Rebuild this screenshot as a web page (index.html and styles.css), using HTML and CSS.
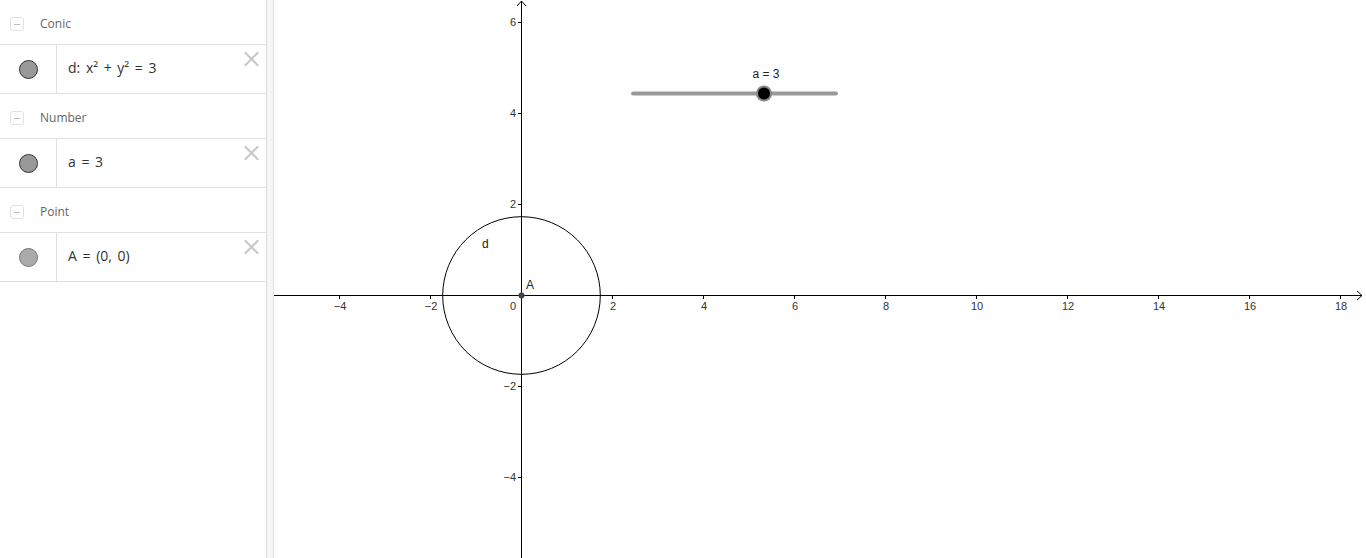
FILE: index.html
```html
<!DOCTYPE html>
<html lang="en">
<head>
<meta charset="utf-8">
<title>GeoGebra</title>
<link rel="stylesheet" href="styles.css">
</head>
<body>
<div class="app">
  <aside class="algebra">
    <section class="group">
      <div class="group-head"><span class="toggle"></span><span class="group-title">Conic</span></div>
      <div class="item">
        <div class="marble-cell"><span class="marble"></span></div>
        <div class="formula">d: x² + y² = 3</div>
        <span class="close"></span>
      </div>
    </section>
    <section class="group">
      <div class="group-head"><span class="toggle"></span><span class="group-title">Number</span></div>
      <div class="item">
        <div class="marble-cell"><span class="marble"></span></div>
        <div class="formula">a = 3</div>
        <span class="close"></span>
      </div>
    </section>
    <section class="group">
      <div class="group-head"><span class="toggle"></span><span class="group-title">Point</span></div>
      <div class="item">
        <div class="marble-cell"><span class="marble light"></span></div>
        <div class="formula">A = (0, 0)</div>
        <span class="close"></span>
      </div>
    </section>
  </aside>
  <div class="splitter"></div>
  <main class="graphics">
    <svg class="canvas" width="1092" height="558" viewBox="0 0 1092 558" xmlns="http://www.w3.org/2000/svg">
      <g stroke="#000" stroke-width="1" fill="none">
        <line x1="0" y1="295.5" x2="1088" y2="295.5"/>
        <polyline points="1083,291 1088,295.5 1083,300"/>
        <line x1="247.5" y1="558" x2="247.5" y2="1"/>
        <polyline points="243,6 247.5,1 252,6"/>
        <line x1="65.5" y1="295.5" x2="65.5" y2="299"/>
        <line x1="156.5" y1="295.5" x2="156.5" y2="299"/>
        <line x1="338.5" y1="295.5" x2="338.5" y2="299"/>
        <line x1="429.5" y1="295.5" x2="429.5" y2="299"/>
        <line x1="520.5" y1="295.5" x2="520.5" y2="299"/>
        <line x1="611.5" y1="295.5" x2="611.5" y2="299"/>
        <line x1="702.5" y1="295.5" x2="702.5" y2="299"/>
        <line x1="793.5" y1="295.5" x2="793.5" y2="299"/>
        <line x1="884.5" y1="295.5" x2="884.5" y2="299"/>
        <line x1="975.5" y1="295.5" x2="975.5" y2="299"/>
        <line x1="1066.5" y1="295.5" x2="1066.5" y2="299"/>
        <line x1="244" y1="22.5" x2="247.5" y2="22.5"/>
        <line x1="244" y1="113.5" x2="247.5" y2="113.5"/>
        <line x1="244" y1="204.5" x2="247.5" y2="204.5"/>
        <line x1="244" y1="386.5" x2="247.5" y2="386.5"/>
        <line x1="244" y1="477.5" x2="247.5" y2="477.5"/>
        <circle cx="247.5" cy="295.5" r="78.8"/>
      </g>
      <g class="axis-label" text-anchor="middle">
        <text x="66" y="310">−4</text>
        <text x="157" y="310">−2</text>
        <text x="339" y="310">2</text>
        <text x="430" y="310">4</text>
        <text x="521" y="310">6</text>
        <text x="612" y="310">8</text>
        <text x="703" y="310">10</text>
        <text x="794" y="310">12</text>
        <text x="885" y="310">14</text>
        <text x="976" y="310">16</text>
        <text x="1067" y="310">18</text>
      </g>
      <g class="axis-label" text-anchor="end">
        <text x="242" y="26">6</text>
        <text x="242" y="117">4</text>
        <text x="242" y="208">2</text>
        <text x="242" y="310">0</text>
        <text x="242" y="390">−2</text>
        <text x="242" y="481">−4</text>
      </g>
      <circle cx="247.5" cy="295.5" r="3" fill="#444"/>
      <text class="obj-label" x="252" y="289">A</text>
      <text class="obj-label" x="208" y="248">d</text>
      <line x1="359" y1="93.5" x2="562" y2="93.5" stroke="#999" stroke-width="4" stroke-linecap="round"/>
      <circle cx="490" cy="93.5" r="8" fill="#888"/>
      <circle cx="490" cy="93.5" r="6" fill="#000"/>
      <text class="obj-label" x="492" y="78" text-anchor="middle">a = 3</text>
    </svg>
  </main>
</div>
</body>
</html>
```

FILE: styles.css
```css
html, body {
  margin: 0;
  padding: 0;
  background: #fff;
  overflow: hidden;
}

.app {
  display: flex;
  width: 1366px;
  height: 558px;
}

.algebra {
  width: 266px;
  flex: none;
  border-right: 1px solid #dcdcdc;
  background: #fff;
  font-family: "Open Sans", "Liberation Sans", sans-serif;
}

.group-head {
  height: 44px;
  display: flex;
  align-items: center;
  padding-left: 10px;
  padding-top: 2px;
  box-sizing: border-box;
}

.toggle {
  position: relative;
  width: 14px;
  height: 14px;
  border: 1px solid #e2e2e2;
  border-radius: 3px;
  margin-top: 2px;
  margin-right: 16px;
  box-sizing: border-box;
}

.toggle::after {
  content: "";
  position: absolute;
  left: 3px;
  right: 3px;
  top: 6px;
  height: 1px;
  background: #bdbdbd;
}

.group-title {
  font-size: 12px;
  color: #666;
}

.item {
  height: 48px;
  display: flex;
  border-top: 1px solid #e0e0e0;
  border-bottom: 1px solid #e0e0e0;
}

.marble-cell {
  width: 56px;
  flex: none;
  display: flex;
  align-items: center;
  justify-content: center;
  border-right: 1px solid #e0e0e0;
}

.marble {
  width: 17px;
  height: 17px;
  border-radius: 50%;
  background: #999;
  border: 1px solid #333;
}

.marble.light {
  background: #aaa;
  border-color: #777;
}

.formula {
  flex: 1;
  display: flex;
  align-items: center;
  padding-left: 11px;
  padding-bottom: 4px;
  font-size: 14px;
  word-spacing: 2px;
  color: #333;
}

.close {
  position: relative;
  width: 15px;
  height: 15px;
  margin-top: 6px;
  margin-right: 7px;
  flex: none;
}

.close::before,
.close::after {
  content: "";
  position: absolute;
  left: -2px;
  top: 7px;
  width: 19px;
  height: 2px;
  background: #c8c8c8;
  transform: rotate(45deg);
}

.close::after {
  transform: rotate(-45deg);
}

.splitter {
  width: 6px;
  flex: none;
  background: #f5f5f5;
  border-right: 1px solid #e6e6e6;
}

.graphics {
  flex: 1;
  overflow: hidden;
  background: #fff;
}

.canvas {
  display: block;
}

.axis-label {
  font-family: "Liberation Sans", Arial, sans-serif;
  font-size: 11px;
  fill: #333;
}

.obj-label {
  font-family: "Liberation Sans", Arial, sans-serif;
  font-size: 12px;
  fill: #222;
}
```
